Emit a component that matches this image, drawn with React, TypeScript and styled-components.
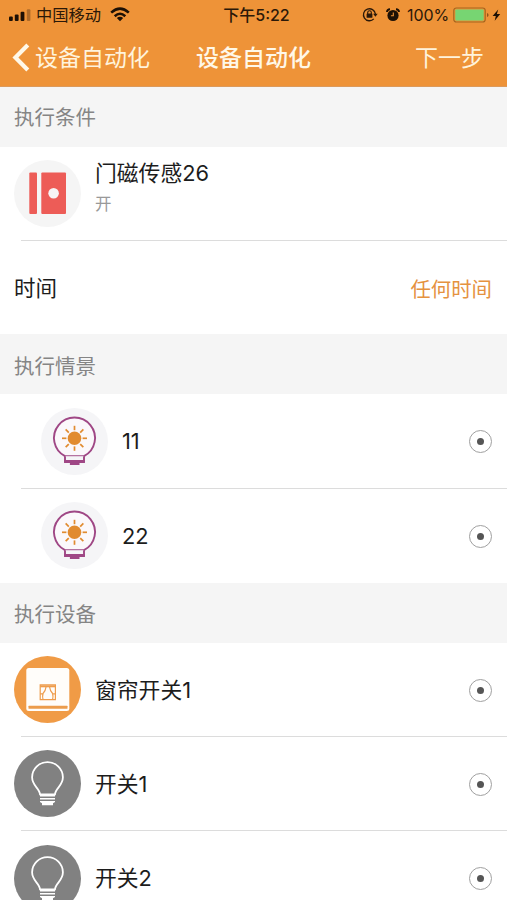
import React from 'react';
import styled, { createGlobalStyle } from 'styled-components';

const GlobalStyle = createGlobalStyle`
  * { box-sizing: border-box; }
  body {
    margin: 0;
    background: #fff;
    font-family: Inter, "Noto Sans CJK SC", sans-serif;
    color: #1c1c1c;
  }
  svg { display: block; flex: none; }
`;

const Screen = styled.main`
  width: 507px;
  height: 900px;
  overflow: hidden;
  background: #fff;
`;

const Header = styled.header`
  height: 87px;
  background: #ee9338;
  border-bottom: 1px solid #dc9a5c;
`;

const StatusBar = styled.div`
  height: 29px;
  display: grid;
  grid-template-columns: 1fr auto 1fr;
  align-items: center;
  padding: 0 5px 0 8px;
  color: #2b1808;
  font-size: 16.3px;
  line-height: 28px;
`;

const StatusGroup = styled.div<{ $end?: boolean }>`
  display: flex;
  align-items: center;
  justify-content: ${(p) => (p.$end ? 'flex-end' : 'flex-start')};
`;

const Carrier = styled.span`
  margin: 0 9px 0 5px;
`;

const Clock = styled.span`
  font-size: 16px;
  font-weight: 500;
  padding-left: 3px;
`;

const Percent = styled.span`
  margin: 0 4px 0 7px;
  font-size: 16px;
  letter-spacing: -0.1px;
`;

const AlarmSlot = styled.span`
  margin-left: 8px;
`;

const NavBar = styled.nav`
  height: 57px;
  display: grid;
  grid-template-columns: 1fr auto 1fr;
  align-items: center;
  padding: 0 23px 0 12px;
  color: #fff3dc;
  font-size: 23px;
  line-height: 57px;
`;

const NavButton = styled.button<{ $end?: boolean }>`
  display: flex;
  align-items: center;
  gap: 5px;
  justify-self: ${(p) => (p.$end ? 'end' : 'start')};
  border: 0;
  padding: 0;
  background: none;
  color: inherit;
  font: inherit;
  line-height: 58px;
`;

const Title = styled.h1`
  margin: 0;
  font-size: 23px;
  font-weight: 500;
  line-height: 58px;
  color: #fff8e8;
  padding-left: 11px;
`;

const SectionHead = styled.h2<{ $drop?: number }>`
  height: 60px;
  margin: 0;
  padding: ${(p) => p.$drop ?? 1}px 0 0 14px;
  background: #f5f5f5;
  color: #858585;
  font-size: 20.5px;
  font-weight: 400;
  line-height: 60px;
`;

const Row = styled.div<{ $height?: number; $indent?: boolean; $line?: boolean }>`
  height: ${(p) => p.$height ?? 94}px;
  display: flex;
  align-items: center;
  padding: 0 15px 1px ${(p) => (p.$indent ? 41 : 14)}px;
  background: ${(p) =>
    p.$line ? 'linear-gradient(#dcdcdc, #dcdcdc) 21px 100% / 100% 1px no-repeat #fff' : '#fff'};
`;

const Label = styled.span`
  flex: 1;
  margin-left: 14px;
  font-size: 21.8px;
  line-height: 32px;
`;

const DeviceText = styled.div`
  align-self: flex-start;
  margin: 10px 0 0 14px;
  font-size: 21.8px;
  line-height: 32px;
`;

const State = styled.div`
  color: #999;
  font-size: 16.5px;
  line-height: 30px;
`;

const TimeLabel = styled.span`
  flex: 1;
  padding-bottom: 1px;
  font-size: 21.5px;
`;

const TimeValue = styled.span`
  padding-top: 1px;
  color: #e5923f;
  font-size: 20.4px;
`;

const Radio = styled.span`
  width: 23px;
  height: 23px;
  display: grid;
  place-items: center;
  margin-top: 1px;
  border: 1.5px solid #a0a0a0;
  border-radius: 50%;
  &::after {
    content: '';
    width: 7px;
    height: 7px;
    border-radius: 50%;
    background: #555;
  }
`;

const Signal = () => (
  <svg width="23" height="14" viewBox="0 0 23 14" fill="#1d1005">
    <rect x="1" y="8.5" width="3.8" height="4.5" rx="1" />
    <rect x="6.8" y="6.5" width="3.8" height="6.5" rx="1" />
    <rect x="12.6" y="3.8" width="3.8" height="9.2" rx="1" />
    <rect x="18.8" y="1.2" width="3.6" height="11.8" rx="1" opacity=".3" />
  </svg>
);

const Wifi = () => (
  <svg width="20" height="15" viewBox="0 0 20 15" fill="none" stroke="#1d1005" strokeWidth="2.6">
    <path d="M1.2 5.6Q10-2.2 18.8 5.6" />
    <path d="M4.7 9.2Q10 4.3 15.3 9.2" />
    <path d="M10 14.3L6.8 11Q10 8.4 13.2 11Z" fill="#1d1005" stroke="none" />
  </svg>
);

const RotationLock = () => (
  <svg width="16" height="15" viewBox="0 0 16 15" fill="none" stroke="#2b1808">
    <path d="M11.8 11.9A6 6 0 1 1 13.4 7" strokeWidth="1.3" />
    <path d="M11.1 6.7h4.6l-2.3 3.1z" fill="#2b1808" stroke="none" />
    <rect x="4.6" y="6.5" width="5.8" height="4.2" rx=".5" fill="#2b1808" stroke="none" />
    <path d="M5.7 7V5.5a1.8 1.8 0 0 1 3.6 0V7" strokeWidth="1.1" />
  </svg>
);

const Alarm = () => (
  <svg width="14" height="14" viewBox="0 0 14 14">
    <circle cx="7" cy="7.5" r="5.6" fill="#1d1005" />
    <path d="M1 4A3 3 0 0 1 4 1.2M10 1.2A3 3 0 0 1 13 4" fill="none" stroke="#1d1005" strokeWidth="1.9" />
    <path d="M7.3 4.6v3.2H4.9" fill="none" stroke="#ee9338" strokeWidth="1.1" />
  </svg>
);

const Battery = () => (
  <svg width="49" height="16" viewBox="0 0 49 16">
    <rect x=".8" y="1" width="31.4" height="14" rx="2.5" fill="none" stroke="#a4661e" strokeWidth="1.2" />
    <rect x="2.3" y="2.5" width="28.4" height="11" rx="1" fill="#77d572" />
    <path d="M34 6v4q1.6-.6 1.6-2T34 6z" fill="#8f551c" />
    <path d="M45.2 2.5L39.6 9h3.2l-1.1 4.8L47.2 7h-3.3z" fill="#1d1005" />
  </svg>
);

const BackArrow = () => (
  <svg width="18" height="30" viewBox="0 0 18 30" fill="none" stroke="#fff8e8" strokeWidth="4.2">
    <path d="M15.8 2L3.4 14.5 15.8 27" />
  </svg>
);

const DoorSensorIcon = () => (
  <svg width="67" height="67" viewBox="0 0 67 67">
    <circle cx="33.5" cy="33.5" r="33.5" fill="#f5f5f5" />
    <rect x="15.3" y="12.5" width="7.7" height="41.5" rx="1" fill="#ed5c57" />
    <rect x="27.3" y="12.5" width="24.7" height="41.5" rx="1" fill="#ed5c57" />
    <circle cx="39.6" cy="33.3" r="5.3" fill="#f7f4f4" />
  </svg>
);

const rays = [0, 45, 90, 135, 180, 225, 270, 315];

const SceneIcon = () => (
  <svg width="67" height="67" viewBox="0 0 67 67">
    <circle cx="33.5" cy="33.5" r="33.5" fill="#f5f5f7" />
    <path d="M24 48.2A20.5 20.5 0 1 1 43 48.2Z" fill="#fbf8fb" stroke="#9f4785" strokeWidth="1.9" />
    <path d="M24 48.2v5.3h19v-5.3" fill="#f5f5f7" stroke="#9f4785" strokeWidth="1.9" />
    <path d="M23.1 52h20.8v3h-5.4v2.1h-9.6V55h-5.8z" fill="#9f4785" />
    <circle cx="33.5" cy="30.3" r="6.8" fill="#e18b30" />
    {rays.map((angle) => (
      <path key={angle} d="M33.5 22.2V17.8" stroke="#e18b30" strokeWidth="1.7" transform={`rotate(${angle} 33.5 30.3)`} />
    ))}
  </svg>
);

const CurtainIcon = () => (
  <svg width="67" height="67" viewBox="0 0 67 67">
    <circle cx="33.5" cy="33.5" r="33.5" fill="#f09b46" />
    <rect x="12.3" y="12" width="43" height="43" rx="2.5" fill="#fffdfa" />
    <rect x="14.5" y="49.8" width="39" height="3" rx=".5" fill="#ec9c4c" />
    <g fill="none" stroke="#ee9c4c" strokeWidth="1.2">
      <path d="M26.2 28.8h15.2v14.8H26.2z" />
      <path d="M26.2 30.3h15.2" strokeWidth="2" />
      <path d="M32 31q-.4 4-3 6.5-.8 3 0 6M35.6 31q.4 4 3 6.5.8 3 0 6M26.2 37.8H29M38.6 37.8h2.8" />
    </g>
  </svg>
);

const BulbIcon = () => (
  <svg width="67" height="67" viewBox="0 0 67 67">
    <circle cx="33.5" cy="33.5" r="33.5" fill="#818181" />
    <path
      d="M26 44.3C25.7 38.5 18.1 35.8 18.1 27.3A15.4 15.1 0 0 1 48.9 27.3C48.9 35.8 41.2 38.5 41 44.3Z"
      fill="none"
      stroke="#fff"
      strokeWidth="1.8"
    />
    <path d="M26 45.8h15M26 48.7h15" stroke="#fff" strokeWidth="1.6" />
    <path d="M26 51h15v1l-2 1.2v2H28v-2L26 52z" fill="#fff" />
  </svg>
);

const scenes = [
  { name: '11', height: 95, line: true },
  { name: '22', height: 94, line: false },
];

const devices = [
  { name: '窗帘开关1', icon: <CurtainIcon />, height: 94 },
  { name: '开关1', icon: <BulbIcon />, height: 94 },
  { name: '开关2', icon: <BulbIcon />, height: 95 },
];

export default function App() {
  return (
    <>
      <GlobalStyle />
      <Screen>
        <Header>
          <StatusBar>
            <StatusGroup>
              <Signal />
              <Carrier>中国移动</Carrier>
              <Wifi />
            </StatusGroup>
            <Clock>下午5:22</Clock>
            <StatusGroup $end>
              <RotationLock />
              <AlarmSlot><Alarm /></AlarmSlot>
              <Percent>100%</Percent>
              <Battery />
            </StatusGroup>
          </StatusBar>
          <NavBar>
            <NavButton><BackArrow />设备自动化</NavButton>
            <Title>设备自动化</Title>
            <NavButton $end>下一步</NavButton>
          </NavBar>
        </Header>

        <SectionHead>执行条件</SectionHead>
        <Row $line>
          <DoorSensorIcon />
          <DeviceText>
            门磁传感26
            <State>开</State>
          </DeviceText>
        </Row>
        <Row $height={93}>
          <TimeLabel>时间</TimeLabel>
          <TimeValue>任何时间</TimeValue>
        </Row>

        <SectionHead $drop={3}>执行情景</SectionHead>
        {scenes.map((scene) => (
          <Row key={scene.name} $indent $height={scene.height} $line={scene.line}>
            <SceneIcon />
            <Label>{scene.name}</Label>
            <Radio />
          </Row>
        ))}

        <SectionHead $drop={2}>执行设备</SectionHead>
        {devices.map((device) => (
          <Row key={device.name} $height={device.height} $line>
            {device.icon}
            <Label>{device.name}</Label>
            <Radio />
          </Row>
        ))}
      </Screen>
    </>
  );
}
